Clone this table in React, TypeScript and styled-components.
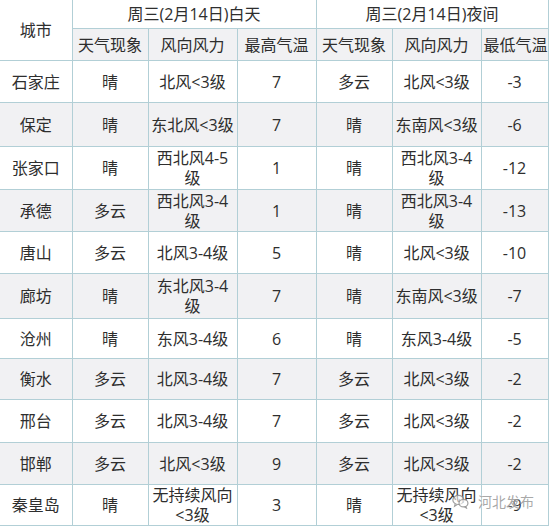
import React from 'react'
import styled, { createGlobalStyle } from 'styled-components'

const GlobalStyle = createGlobalStyle`
  html, body {
    margin: 0;
    padding: 0;
    background: #ffffff;
  }
  body {
    font-family: "Open Sans", "Noto Sans CJK SC", sans-serif;
    color: #2e2e2e;
  }
`

const Wrapper = styled.div`
  position: relative;
  width: 550px;
  height: 526px;
  overflow: hidden;
  background: #ffffff;
`

const Table = styled.table`
  width: 548px;
  border-collapse: collapse;
  table-layout: fixed;
  font-size: 16px;
  line-height: 20px;
`

const HeadCell = styled.th<{ $shade?: boolean; $h?: number; $first?: boolean; $top?: boolean }>`
  height: ${(p) => (p.$h ? `${p.$h}px` : 'auto')};
  padding: 0 2px;
  border: 1px solid #b2cfd6;
  border-left: ${(p) => (p.$first ? 'none' : '1px solid #b2cfd6')};
  border-top: ${(p) => (p.$top ? 'none' : '1px solid #b2cfd6')};
  background: ${(p) => (p.$shade ? '#f1f1f3' : '#ffffff')};
  font-weight: normal;
  text-align: center;
  vertical-align: middle;
  color: #2e2e2e;
  white-space: nowrap;
`

const Row = styled.tr<{ $shade: boolean; $h: number }>`
  height: ${(p) => p.$h}px;
  background: ${(p) => (p.$shade ? '#f1f1f3' : '#ffffff')};
`

const Cell = styled.td<{ $first?: boolean }>`
  padding: 0 2px;
  border: 1px solid #b2cfd6;
  border-left: ${(p) => (p.$first ? 'none' : '1px solid #b2cfd6')};
  text-align: center;
  vertical-align: middle;
  white-space: nowrap;
`

/* watermark stamped over the last row, as in the source image */
const Watermark = styled.div`
  position: absolute;
  right: 16px;
  bottom: 15px;
  display: flex;
  align-items: center;
  gap: 9px;
  font-size: 14px;
  color: rgba(145, 145, 145, 0.8);
  text-shadow: 0 0 2px rgba(255, 255, 255, 0.95);
  font-family: "Noto Sans CJK SC", sans-serif;
  pointer-events: none;
`

type Line = string | string[]

interface IRowData {
  city: string
  dayWx: string
  dayWind: Line
  high: string
  nightWx: string
  nightWind: Line
  low: string
  h: number
}

const rows: IRowData[] = [
  { city: '石家庄', dayWx: '晴', dayWind: '北风<3级', high: '7', nightWx: '多云', nightWind: '北风<3级', low: '-3', h: 42 },
  { city: '保定', dayWx: '晴', dayWind: '东北风<3级', high: '7', nightWx: '晴', nightWind: '东南风<3级', low: '-6', h: 44 },
  { city: '张家口', dayWx: '晴', dayWind: ['西北风4-5', '级'], high: '1', nightWx: '晴', nightWind: ['西北风3-4', '级'], low: '-12', h: 43 },
  { city: '承德', dayWx: '多云', dayWind: ['西北风3-4', '级'], high: '1', nightWx: '晴', nightWind: ['西北风3-4', '级'], low: '-13', h: 42 },
  { city: '唐山', dayWx: '多云', dayWind: '北风3-4级', high: '5', nightWx: '晴', nightWind: '北风<3级', low: '-10', h: 42 },
  { city: '廊坊', dayWx: '晴', dayWind: ['东北风3-4', '级'], high: '7', nightWx: '晴', nightWind: '东南风<3级', low: '-7', h: 45 },
  { city: '沧州', dayWx: '晴', dayWind: '东风3-4级', high: '6', nightWx: '晴', nightWind: '东风3-4级', low: '-5', h: 40 },
  { city: '衡水', dayWx: '多云', dayWind: '北风3-4级', high: '7', nightWx: '多云', nightWind: '北风<3级', low: '-2', h: 41 },
  { city: '邢台', dayWx: '多云', dayWind: '北风3-4级', high: '7', nightWx: '多云', nightWind: '北风<3级', low: '-2', h: 43 },
  { city: '邯郸', dayWx: '多云', dayWind: '北风<3级', high: '9', nightWx: '多云', nightWind: '北风<3级', low: '-2', h: 42 },
  { city: '秦皇岛', dayWx: '晴', dayWind: ['无持续风向', '<3级'], high: '3', nightWx: '晴', nightWind: ['无持续风向', '<3级'], low: '-9', h: 41 }
]

const renderLine = (v: Line) =>
  Array.isArray(v)
    ? v.map((part, i) => (
        <React.Fragment key={i}>
          {i > 0 && <br />}
          {part}
        </React.Fragment>
      ))
    : v

const WeChatIcon = () => (
  <svg width="17" height="15" viewBox="0 0 16 14" fill="none" stroke="rgba(140,140,140,0.85)" strokeWidth="1.1">
    <ellipse cx="6" cy="5.5" rx="5.2" ry="4.3" fill="rgba(255,255,255,0.6)" />
    <path d="M3 9.2 L2.4 11.4 L5 9.9" fill="rgba(255,255,255,0.6)" />
    <ellipse cx="10.8" cy="8.6" rx="4.2" ry="3.5" fill="rgba(255,255,255,0.6)" />
    <path d="M13 11.6 L13.6 13.2 L11.7 12" />
  </svg>
)

export default function App() {
  return (
    <Wrapper>
      <GlobalStyle />
      <Table>
        <colgroup>
          <col style={{ width: 72 }} />
          <col style={{ width: 76 }} />
          <col style={{ width: 89 }} />
          <col style={{ width: 79 }} />
          <col style={{ width: 76 }} />
          <col style={{ width: 89 }} />
          <col style={{ width: 67 }} />
        </colgroup>
        <thead>
          <tr>
            <HeadCell rowSpan={2} $first $top>城市</HeadCell>
            <HeadCell colSpan={3} $h={28} $top>周三(2月14日)白天</HeadCell>
            <HeadCell colSpan={3} $top>周三(2月14日)夜间</HeadCell>
          </tr>
          <tr>
            <HeadCell $shade $h={31}>天气现象</HeadCell>
            <HeadCell $shade>风向风力</HeadCell>
            <HeadCell $shade>最高气温</HeadCell>
            <HeadCell $shade>天气现象</HeadCell>
            <HeadCell $shade>风向风力</HeadCell>
            <HeadCell $shade>最低气温</HeadCell>
          </tr>
        </thead>
        <tbody>
          {rows.map((r, i) => (
            <Row key={r.city} $shade={i % 2 === 1} $h={r.h}>
              <Cell $first>{r.city}</Cell>
              <Cell>{r.dayWx}</Cell>
              <Cell>{renderLine(r.dayWind)}</Cell>
              <Cell>{r.high}</Cell>
              <Cell>{r.nightWx}</Cell>
              <Cell>{renderLine(r.nightWind)}</Cell>
              <Cell>{r.low}</Cell>
            </Row>
          ))}
        </tbody>
      </Table>
      <Watermark>
        <WeChatIcon />
        <span>河北发布</span>
      </Watermark>
    </Wrapper>
  )
}
